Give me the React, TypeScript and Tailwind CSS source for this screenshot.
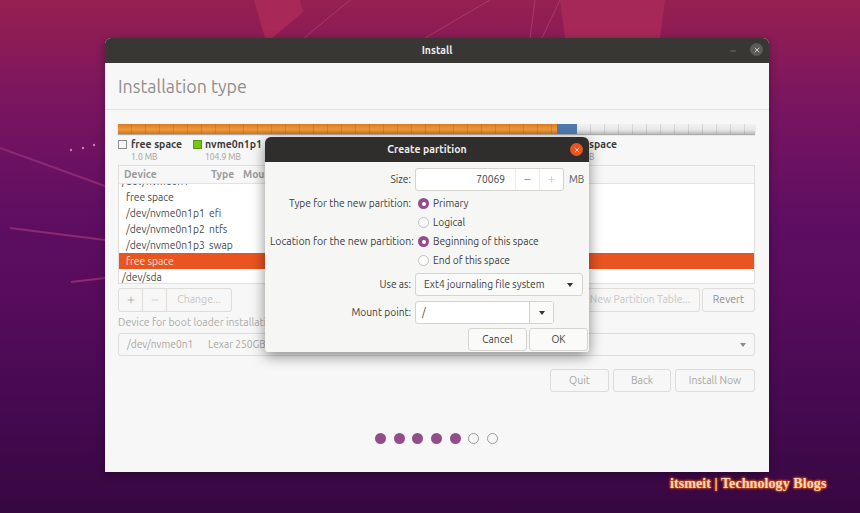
import { Minus, Plus, X } from 'lucide-react'

const font = "font-['Ubuntu','Noto_Sans','Open_Sans',sans-serif]"

const rows = [
  { dev: '/dev/nvme0n1p1', type: 'efi' },
  { dev: '/dev/nvme0n1p2', type: 'ntfs' },
  { dev: '/dev/nvme0n1p3', type: 'swap' },
]

function Wallpaper() {
  return (
    <svg className="absolute inset-0 w-full h-full" viewBox="0 0 860 513" preserveAspectRatio="none">
      <polygon points="254,0 300,0 303,12 272,38 265,38" fill="#a82857" />
      <polygon points="560,0 665,0 660,38 565,38" fill="#a62858" />
      <g stroke="#a83a68" strokeWidth="1" fill="none">
        <line x1="350" y1="0" x2="304" y2="38" />
        <line x1="490" y1="0" x2="425" y2="38" />
        <line x1="535" y1="0" x2="530" y2="38" />
        <line x1="560" y1="0" x2="542" y2="38" />
      </g>
      <g stroke="#8c2a72" strokeWidth="2" fill="none">
        <line x1="0" y1="148" x2="105" y2="186" />
        <line x1="10" y1="228" x2="105" y2="240" />
        <line x1="71" y1="282" x2="105" y2="278" />
      </g>
      <circle cx="71" cy="150" r="1.2" fill="#c77fb0" />
      <circle cx="83" cy="148" r="1.2" fill="#c77fb0" />
      <circle cx="94" cy="145" r="1.2" fill="#c77fb0" />
    </svg>
  )
}

function Radio({ on, label }: { on?: boolean; label: string }) {
  return (
    <div className="flex items-center gap-[4px] h-[19px] text-[#3d3d3d]">
      {on ? (
        <span className="w-[11px] h-[11px] rounded-full bg-[#924d8b] flex items-center justify-center">
          <span className="w-[4px] h-[4px] rounded-full bg-white" />
        </span>
      ) : (
        <span className="w-[11px] h-[11px] rounded-full bg-white border border-[#c4c0bb]" />
      )}
      {label}
    </div>
  )
}

function GhostButton({ label, className }: { label: string; className: string }) {
  return (
    <div className={`flex items-center justify-center rounded-[3px] border border-[#dedbd8] text-[10.5px] ${className}`}>
      {label}
    </div>
  )
}

function Caret() {
  return <span className="w-0 h-0 border-x-[3.5px] border-x-transparent border-t-[4px] border-t-[#333]" />
}

function Dialog() {
  return (
    <div className="absolute left-[160px] top-[99px] w-[324px] h-[215px] rounded-t-[6px] rounded-b-[3px] bg-[#f6f6f5] shadow-[0_4px_14px_rgba(0,0,0,0.45)] flex flex-col">
      <div className="relative h-[25px] shrink-0 rounded-t-[6px] bg-[#302e2c] flex items-center justify-center text-[10.5px] font-bold text-[#ecebe9]">
        Create partition
        <span className="absolute right-[6px] top-[6px] w-[13px] h-[13px] rounded-full bg-[#e9541f] flex items-center justify-center">
          <X size={8} strokeWidth={2.5} className="text-[#f6d8c8]" />
        </span>
      </div>
      <div className="flex flex-col pt-[6px] pl-[5px] text-[10.2px] text-[#3d3d3d]">
        <div className="flex items-center h-[23px]">
          <div className="w-[141px] text-right">Size:</div>
          <div className="ml-[4px] w-[149px] h-[23px] rounded-[3px] border border-[#d6d3cf] bg-white flex items-center">
            <div className="flex-1 text-right pr-[10px]">70069</div>
            <div className="w-[24px] h-full border-l border-[#eceae8] flex items-center justify-center">
              <Minus size={9} className="text-[#777]" />
            </div>
            <div className="w-[24px] h-full border-l border-[#eceae8] flex items-center justify-center">
              <Plus size={9} className="text-[#c8c8c8]" />
            </div>
          </div>
          <div className="ml-[5px] text-[#555]">MB</div>
        </div>
        <div className="flex mt-[3px]">
          <div className="w-[141px] text-right h-[19px] leading-[19px]">Type for the new partition:</div>
          <div className="ml-[7px]">
            <Radio on label="Primary" />
            <Radio label="Logical" />
          </div>
        </div>
        <div className="flex">
          <div className="w-[141px] text-right h-[19px] leading-[19px] whitespace-nowrap text-[10.5px]">Location for the new partition:</div>
          <div className="ml-[7px]">
            <Radio on label="Beginning of this space" />
            <Radio label="End of this space" />
          </div>
        </div>
        <div className="flex items-center h-[23px] mt-[3px]">
          <div className="w-[141px] text-right">Use as:</div>
          <div className="ml-[4px] w-[168px] h-[23px] rounded-[3px] border border-[#d6d3cf] bg-[#fafaf9] flex items-center justify-between pl-[8px] pr-[9px]">
            Ext4 journaling file system
            <Caret />
          </div>
        </div>
        <div className="flex items-center h-[23px] mt-[5px]">
          <div className="w-[141px] text-right">Mount point:</div>
          <div className="ml-[4px] w-[139px] h-[23px] rounded-[3px] border border-[#d6d3cf] bg-white flex items-center">
            <div className="flex-1 pl-[6px]">/</div>
            <div className="w-[24px] h-full border-l border-[#d6d3cf] bg-[#fafaf9] flex items-center justify-center">
              <Caret />
            </div>
          </div>
        </div>
        <div className="flex justify-end gap-[2px] mt-[4px] pr-[1px]">
          <div className="w-[59px] h-[23px] rounded-[3px] border border-[#d6d3cf] bg-[#fafaf9] flex items-center justify-center">Cancel</div>
          <div className="w-[59px] h-[23px] rounded-[3px] border border-[#d6d3cf] bg-[#fafaf9] flex items-center justify-center">OK</div>
        </div>
      </div>
    </div>
  )
}

export default function App() {
  return (
    <div className={`relative w-[860px] h-[513px] overflow-hidden bg-[linear-gradient(#962050,#7a1560_20%,#5f0e62_42%,#540b5a_62%,#450a50_80%,#370740)] ${font}`}>
      <Wallpaper />

      {/* installer window */}
      <div className="absolute left-[105px] top-[38px] w-[664px] h-[434px] flex flex-col rounded-t-[6px] bg-[#f7f7f7] shadow-[0_2px_10px_rgba(0,0,0,0.3)]">
        <div className="relative h-[25px] shrink-0 rounded-t-[6px] bg-[#393734] flex items-center justify-center text-[10.5px] font-bold text-[#ecebe9]">
          Install
          <Minus size={8} className="absolute right-[32px] top-[9px] text-[#8f8d8a]" />
          <span className="absolute right-[6px] top-[5px] w-[13px] h-[13px] rounded-full bg-[#5d5b58] flex items-center justify-center">
            <X size={8} strokeWidth={2.5} className="text-[#e6e5e3]" />
          </span>
        </div>

        <div className="h-[47px] shrink-0 flex items-center pl-[13px] border-b border-[#e4e3e1] text-[17.8px] text-[#8f8e8c]">
          Installation type
        </div>

        <div className="relative flex-1 flex flex-col px-[13px] pt-[14px]">
          {/* partition bar */}
          <div className="flex h-[10px] w-[637px] shadow-[0_1px_1px_rgba(0,0,0,0.3)]">
            <div className="w-[439px] bg-[repeating-linear-gradient(90deg,transparent_0_13px,rgba(120,60,0,0.2)_13px_14px),linear-gradient(#d97c22,#ee9a3c_55%,#cf7620)]" />
            <div className="w-[20px] bg-[#4f79ad]" />
            <div className="flex-1 bg-[repeating-linear-gradient(90deg,transparent_0_13px,rgba(0,0,0,0.1)_13px_14px),linear-gradient(#f2f2f2,#e6e6e6_60%,#bdbdbd)]" />
          </div>

          {/* legend */}
          <div className="relative flex h-[26px] mt-[4px] text-[10.5px]">
            <div className="flex gap-[4px] w-[75px]">
              <span className="w-[9px] h-[9px] mt-[2px] border border-[#8c8c8c] bg-[#f7f7f7]" />
              <div>
                <div className="font-bold leading-[13px] text-[#3d3d3d]">free space</div>
                <div className="text-[8.5px] leading-[12px] text-[#9b9b9b]">1.0 MB</div>
              </div>
            </div>
            <div className="flex gap-[3px]">
              <span className="w-[9px] h-[9px] mt-[2px] border border-[#5a9a10] bg-[#74c814]" />
              <div>
                <div className="font-bold leading-[13px] text-[#3d3d3d]">nvme0n1p1</div>
                <div className="text-[8.5px] leading-[12px] text-[#9b9b9b]">104.9 MB</div>
              </div>
            </div>
            <div className="absolute left-[471px] top-0">
              <div className="font-bold leading-[13px] text-[#3d3d3d]">space</div>
              <div className="text-[8.5px] leading-[12px] text-[#9b9b9b]">B</div>
            </div>
          </div>

          {/* device table */}
          <div className="w-[637px] h-[119px] mt-[1px] border border-[#e0dfdd] bg-white overflow-hidden text-[10.3px] text-[#4a4a4a]">
            <div className="flex items-center h-[18px] border-b border-[#e4e3e1] bg-[#f7f7f7] pl-[5px] font-bold text-[#9a9a9a]">
              <span className="w-[87px]">Device</span>
              <span className="w-[32px]">Type</span>
              <span>Mount</span>
            </div>
            <div className="h-[5px] overflow-hidden relative">
              <span className="absolute left-[3px] -top-[10px]">/dev/nvme0n1</span>
            </div>
            <div className="h-[16px] leading-[16px] pl-[7px]">free space</div>
            {rows.map((r) => (
              <div key={r.dev} className="flex h-[16px] leading-[16px] pl-[7px]">
                <span className="w-[83px]">{r.dev}</span>
                <span>{r.type}</span>
              </div>
            ))}
            <div className="h-[16px] leading-[16px] pl-[7px] bg-[#e95420] text-[#f6e6dc]">free space</div>
            <div className="h-[16px] leading-[16px] pl-[3px]">/dev/sda</div>
          </div>

          {/* table toolbar */}
          <div className="flex h-[24px] w-[637px] mt-[4px]">
            <div className="flex rounded-[3px] border border-[#dedbd8] text-[#a8a6a3]">
              <span className="w-[24px] flex items-center justify-center border-r border-[#dedbd8]">
                <Plus size={10} />
              </span>
              <span className="w-[24px] flex items-center justify-center border-r border-[#dedbd8]">
                <Minus size={10} className="text-[#c8c6c3]" />
              </span>
              <span className="w-[64px] flex items-center justify-center text-[10.5px] text-[#c8c6c3]">Change...</span>
            </div>
            <div className="ml-auto flex gap-[2px]">
              <GhostButton label="New Partition Table..." className="w-[120px] text-[#c8c6c3]" />
              <GhostButton label="Revert" className="w-[53px] text-[#8e8c8a]" />
            </div>
          </div>

          <div className="mt-[3px] h-[15px] leading-[15px] text-[10.5px] text-[#acabaa]">Device for boot loader installation:</div>

          <div className="flex items-center justify-between w-[637px] h-[23px] mt-[3px] pl-[8px] pr-[8px] rounded-[3px] border border-[#dedbd8] text-[10.2px] text-[#a8a6a3]">
            <div className="flex">
              <span className="w-[81px]">/dev/nvme0n1</span>
              <span>Lexar 250GB</span>
            </div>
            <span className="w-0 h-0 border-x-[3.5px] border-x-transparent border-t-[4px] border-t-[#8e8c8a]" />
          </div>

          <div className="flex justify-end gap-[4px] w-[637px] mt-[13px]">
            <GhostButton label="Quit" className="w-[59px] h-[23px] text-[#a8a6a3]" />
            <GhostButton label="Back" className="w-[58px] h-[23px] text-[#a8a6a3]" />
            <GhostButton label="Install Now" className="w-[80px] h-[23px] text-[#a8a6a3]" />
          </div>

          {/* step dots */}
          <div className="flex justify-center gap-[7.6px] mt-[41px] w-[637px]">
            {[0, 1, 2, 3, 4].map((i) => (
              <span key={i} className="w-[11px] h-[11px] rounded-full bg-[#924d8b]" />
            ))}
            {[5, 6].map((i) => (
              <span key={i} className="w-[11px] h-[11px] rounded-full border border-[#9b9b9b] bg-[#f7f7f7]" />
            ))}
          </div>
        </div>

        <Dialog />
      </div>

      {/* watermark */}
      <div className="absolute left-[670px] top-[473px] font-['Liberation_Serif',serif] text-[14.2px] font-bold text-[#f6d9c0] [text-shadow:0_0_3px_#e8590c,0_0_3px_#e8590c,0_0_2px_#e8590c]">
        itsmeit | Technology Blogs
      </div>
    </div>
  )
}
